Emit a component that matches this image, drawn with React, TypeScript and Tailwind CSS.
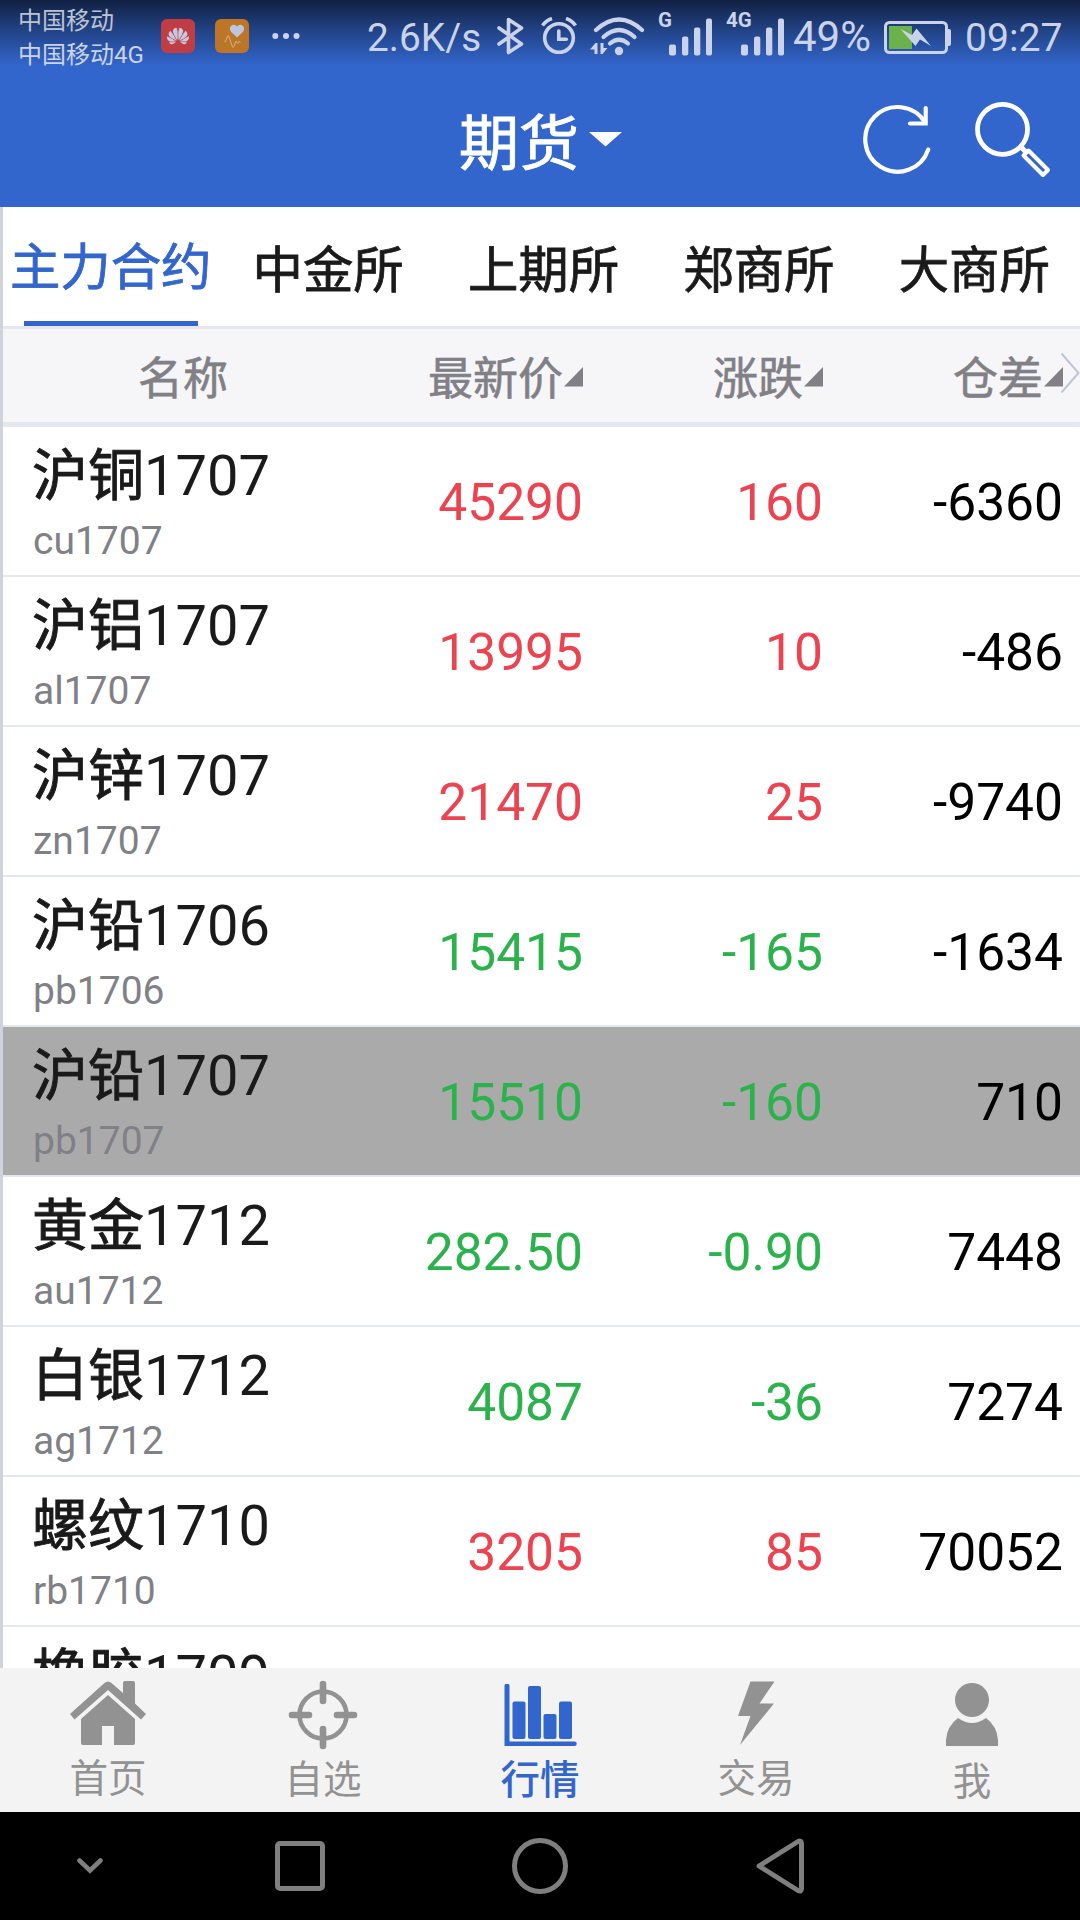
import React from 'react';
import { SiHuawei } from 'react-icons/si';

const tabs = ['主力合约', '中金所', '上期所', '郑商所', '大商所'];

const quotes = [
  { name: '沪铜', month: '1707', code: 'cu1707', price: '45290', change: '160', diff: '-6360', up: true },
  { name: '沪铝', month: '1707', code: 'al1707', price: '13995', change: '10', diff: '-486', up: true },
  { name: '沪锌', month: '1707', code: 'zn1707', price: '21470', change: '25', diff: '-9740', up: true },
  { name: '沪铅', month: '1706', code: 'pb1706', price: '15415', change: '-165', diff: '-1634', up: false },
  { name: '沪铅', month: '1707', code: 'pb1707', price: '15510', change: '-160', diff: '710', up: false, pressed: true },
  { name: '黄金', month: '1712', code: 'au1712', price: '282.50', change: '-0.90', diff: '7448', up: false },
  { name: '白银', month: '1712', code: 'ag1712', price: '4087', change: '-36', diff: '7274', up: false },
  { name: '螺纹', month: '1710', code: 'rb1710', price: '3205', change: '85', diff: '70052', up: true },
  { name: '橡胶', month: '1709', code: '', price: '', change: '', diff: '', up: true },
];

const SignalBars = () => (
  <svg width="43" height="38" viewBox="0 0 43 38" fill="currentColor">
    <rect x="0" y="26.5" width="7" height="11" rx="2" />
    <rect x="13" y="18.5" width="6.3" height="19" rx="2" />
    <rect x="25" y="9.5" width="6.3" height="28" rx="2" />
    <rect x="37" y="0.5" width="6" height="37" rx="2" />
  </svg>
);

const StatusBar = () => (
  <div className="flex h-[72px] bg-linear-to-b from-black/68 from-0% via-black/30 via-48% to-transparent to-92% text-[#cad3ea]">
    <div className="ml-[18px] mt-[4px] w-[143px] text-[24px] leading-[34px] whitespace-nowrap">
      <p className="text-[#bcc3d5]">中国移动</p>
      <p>中国移动4G</p>
    </div>
    <div className="mt-[19px] flex h-[34px] w-[34px] items-center justify-center rounded-[6px] bg-[#c13d44]">
      <SiHuawei size={22} color="#c3cbe0" />
    </div>
    <svg className="mt-[19px] ml-5" width="34" height="34" viewBox="0 0 34 34">
      <rect width="34" height="34" rx="6" fill="#bf7526" />
      <path d="M0 22.8h34" stroke="#a07b50" strokeWidth="0.7" />
      <path d="M22 18.5l-5.8-5.6c-2.8-3.4-.4-7.4 2.7-7.1 1.7.1 2.6 1.2 3.1 2 .5-.8 1.6-2 3.3-2 3.3 0 5.3 4 2.6 7.1z" fill="#bcc6dc" />
      <path d="M9.5 22.8h1l2-5.6c.4-1 1-1 1.3.1l3.6 10.4c.4 1 1 1 1.4 0l2.2-5.5 1.8 2.2 1.3-2 1.5 1" fill="none" stroke="#cfb993" strokeWidth="0.9" />
    </svg>
    <svg className="mt-[32px] ml-[23px]" width="28" height="8" viewBox="0 0 28 8" fill="currentColor">
      <circle cx="3.3" cy="4" r="3" />
      <circle cx="14" cy="4" r="3" />
      <circle cx="24.5" cy="4" r="3" />
    </svg>
    <span className="ml-[67px] mt-[15px] w-[130px] text-[38.8px] leading-[46px]">2.6K/s</span>
    <svg className="mt-[17px]" width="27" height="38" viewBox="0 0 27 38" fill="none" stroke="currentColor" strokeWidth="3.6" strokeLinejoin="round" strokeLinecap="round">
      <path d="M2 11l22.5 16L11.5 35.5V2.5L24.5 11 2 27" />
    </svg>
    <svg className="mt-[17px] ml-[17px]" width="36" height="38" viewBox="0 0 36 38" fill="none" stroke="currentColor">
      <circle cx="18" cy="21" r="14.3" strokeWidth="3.6" />
      <path d="M17.8 14v8.2h7.5" strokeWidth="3.6" strokeLinecap="round" />
      <path d="M1.5 8.5Q5 3.5 11 1.5M34.5 8.5Q31 3.5 25 1.5" strokeWidth="3.6" />
    </svg>
    <svg className="mt-[17px] ml-[13px]" width="55" height="39" viewBox="0 0 55 39" fill="none" stroke="currentColor" strokeWidth="4.2" strokeLinecap="round">
      <path d="M6 13Q29 -8 52 13" />
      <path d="M13.5 20Q29 6 44.5 20" />
      <path d="M20 26.5Q29 19 38 26.5" />
      <circle cx="29" cy="34" r="4.2" fill="currentColor" stroke="none" />
      <path d="M0 32.5L5.5 26H7.5V37H4.5V32.5zM10.5 26H13.5V31H17.5L12.5 37H10.5z" fill="currentColor" stroke="none" />
    </svg>
    <span className="ml-[13px] mt-[8px] w-[11px] text-[20.5px] font-bold leading-[24px]">G</span>
    <div className="mt-[17.5px] w-[43px]">
      <SignalBars />
    </div>
    <span className="ml-[14px] mt-[8px] w-[15px] text-[20.5px] font-bold leading-[24px]">4G</span>
    <div className="mt-[17.5px] w-[43px]">
      <SignalBars />
    </div>
    <span className="ml-[9px] mt-[14px] w-[91px] text-[42px] leading-[46px]">49%</span>
    <svg className="mt-[21px]" width="68" height="33" viewBox="0 0 68 33">
      <rect x="1.5" y="1.5" width="61" height="30" rx="4" fill="none" stroke="currentColor" strokeWidth="3" />
      <path d="M63 8h2a2 2 0 0 1 2 2v13a2 2 0 0 1-2 2h-2z" fill="currentColor" />
      <rect x="5" y="5" width="23" height="23" fill="#6bb24d" />
      <path d="M16.5 8L28 14 32.5 7.5 47 25 36 18.5 31.5 25z" fill="currentColor" />
    </svg>
    <span className="ml-[13px] mt-[15px] text-[39.2px] leading-[46px]">09:27</span>
  </div>
);

const TitleBar = () => (
  <div className="flex h-[135px] text-white">
    <div className="ml-[459px] mt-[33px] w-[130px] text-[60px] leading-[80px] [-webkit-text-stroke:0.9px]">期货</div>
    <svg className="mt-[60px]" width="33" height="15" viewBox="0 0 33 15" fill="currentColor">
      <path d="M0 0h33L16.5 14.5z" />
    </svg>
    <svg className="mt-[30px] ml-[241px]" width="68" height="72" viewBox="0 0 68 72" fill="none" stroke="currentColor" strokeWidth="4.2" strokeLinecap="round">
      <path d="M65.2 47.6A32.3 32.3 0 1 1 62 20.3" />
      <path d="M62.7 6V21.5H47" />
    </svg>
    <svg className="mt-[29px] ml-[44px]" width="78" height="78" viewBox="0 0 78 78" fill="none" stroke="currentColor">
      <circle cx="27.5" cy="28.3" r="25" strokeWidth="4.8" />
      <path d="M45.5 45.5l5 5" strokeWidth="5" />
      <path d="M53.5 49.5L73 69 68 74 48.5 54.5z" strokeWidth="4" strokeLinejoin="round" />
    </svg>
  </div>
);

const Tabs = () => (
  <div className="flex h-[122px] border-b-[3px] border-[#e4e7f0] text-[50.4px] leading-[60px] text-[#1a1a1a] [-webkit-text-stroke:0.8px]">
    {tabs.map((tab, i) =>
      i === 0 ? (
        <div key={tab} className="flex w-[216px] flex-col items-center pt-[31px] text-[#3366cc] whitespace-nowrap">
          {tab}
          <span className="mt-[23px] h-[5px] w-[174px] bg-[#3366cc]" />
        </div>
      ) : (
        <div key={tab} className="w-[216px] pl-[4px] pt-[34px] text-center">{tab}</div>
      )
    )}
  </div>
);

const SortMark = () => (
  <svg className="mt-[33px] ml-px shrink-0" width="19" height="20" viewBox="0 0 19 20" fill="#808086">
    <path d="M19 0v19.5H0z" />
  </svg>
);

const ColumnHead = () => (
  <div className="relative flex h-[98px] border-b-[5px] border-[#e4e7f0] bg-[#f6f6f9] pt-[5px] text-[45px] leading-[92px] text-[#808086]">
    <div className="w-[360px] text-center [-webkit-text-stroke:0.6px]">名称</div>
    <div className="flex w-[220px] justify-end [-webkit-text-stroke:0.6px]">最新价<SortMark /></div>
    <div className="flex w-[240px] justify-end [-webkit-text-stroke:0.6px]">涨跌<SortMark /></div>
    <div className="flex w-[240px] justify-end [-webkit-text-stroke:0.6px]">仓差<SortMark /></div>
    <svg className="absolute right-0 top-[23px]" width="20" height="42" viewBox="0 0 20 42" fill="none" stroke="#bcc6d6" strokeWidth="2">
      <path d="M1.5 1.5L18.5 21 1.5 40.5" />
    </svg>
  </div>
);

const QuoteRow = ({ q }: { q: (typeof quotes)[number] }) => (
  <div className={`flex h-[150px] shrink-0 border-b-2 border-[#e4e7f0] ${q.pressed ? 'bg-[#aaaaaa]' : 'bg-white'}`}>
    <div className="w-[360px] pl-[29px] pt-[13px]">
      <p className="flex text-[56px] leading-[72px] text-[#1a1a1a]">
        <span className="[-webkit-text-stroke:0.9px]">{q.name}</span>
        {q.month}
      </p>
      <p className="pl-px pt-px text-[39px] leading-[57px] text-[#808086]">{q.code}</p>
    </div>
    <div className={`flex pt-[2px] text-right text-[51.5px] leading-[148px] ${q.up ? 'text-[#ec4350]' : 'text-[#2bb24c]'}`}>
      <p className="w-[220px]">{q.price}</p>
      <p className="w-[240px]">{q.change}</p>
      <p className="w-[240px] text-black">{q.diff}</p>
    </div>
  </div>
);

const BottomTabs = () => (
  <div className="grid h-[144px] grid-cols-5 bg-[#f3f3f3] text-center text-[38.5px] leading-[50px] text-[#929292]">
    <div className="flex flex-col items-center pt-[12px]">
      <svg width="76" height="68" viewBox="0 0 76 68" fill="currentColor">
        <path d="M4.5 39.5L0 34 34.5 3Q38 0 41.5 3L53 13V3a2 2 0 0 1 2-2h8a2 2 0 0 1 2 2v20.5L76 34l-5 5.5L38 10z" />
        <path d="M38 15L65 39v24a2 2 0 0 1-2 2H44V46H32v19H13a2 2 0 0 1-2-2V39z" />
      </svg>
      <span className="mt-[6px]">首页</span>
    </div>
    <div className="flex flex-col items-center pr-[2px] pt-[12px]">
      <svg width="70" height="70" viewBox="0 0 70 70" fill="none" stroke="currentColor">
        <circle cx="35" cy="35" r="23.5" strokeWidth="4.6" />
        <path d="M35 4v17M35 49v17M4 35h17M49 35h17" strokeWidth="6.6" strokeLinecap="round" />
      </svg>
      <span className="mt-[5px]">自选</span>
    </div>
    <div className="flex flex-col items-center pt-[16px] text-[#3366cc]">
      <svg width="73" height="66" viewBox="0 0 73 66" fill="currentColor">
        <path d="M.5 2a2.4 2.4 0 0 1 5 0v55.500h65a2.200 2.200 0 0 1 0 4.500H.5z" />
        <rect x="8.5" y="17.5" width="13" height="37.5" rx="2" />
        <rect x="24" y="2" width="13" height="53" rx="2" />
        <rect x="39.5" y="30" width="13" height="25" rx="2" />
        <rect x="55" y="17.5" width="13" height="37.5" rx="2" />
      </svg>
      <span className="mt-[6px] text-[39.5px] font-medium">行情</span>
    </div>
    <div className="flex flex-col items-center pt-[13px]">
      <svg width="37" height="65" viewBox="0 0 37 65" fill="currentColor">
        <path d="M12.5 .5H36.5L21.5 22.5H36L2 64 12.5 35H0z" />
      </svg>
      <span className="mt-[8px]">交易</span>
    </div>
    <div className="flex flex-col items-center pt-[14px]">
      <svg width="52" height="65" viewBox="0 0 52 65" fill="currentColor">
        <circle cx="26" cy="18" r="17" />
        <path d="M0 64V58Q1 44 12 36Q26 46 40 36Q51 44 52 58V64z" />
      </svg>
      <span className="mt-[10px]">我</span>
    </div>
  </div>
);

const NavBar = () => (
  <div className="flex h-[108px] items-center bg-black text-[#7f7f7f]">
    <svg className="ml-[77px]" width="26" height="16" viewBox="0 0 26 16" fill="none" stroke="currentColor" strokeWidth="4.6" strokeLinecap="round">
      <path d="M2.5 2.5L13 12.5 23.5 2.5" />
    </svg>
    <div className="ml-[172px] h-[50px] w-[50px] rounded-[5px] border-[5px] border-[#7f7f7f]" />
    <div className="ml-[187px] h-[56px] w-[56px] rounded-full border-[5px] border-[#7f7f7f]" />
    <svg className="ml-[188px]" width="49" height="56" viewBox="0 0 49 56" fill="none" stroke="currentColor" strokeWidth="5" strokeLinejoin="round">
      <path d="M3 28L42 3.5Q45.5 2 45.5 5.5V50.5Q45.5 54 42 52.5z" />
    </svg>
  </div>
);

export default function App() {
  return (
    <div className="flex h-[1920px] w-[1080px] flex-col overflow-hidden bg-white font-['Roboto','Noto_Sans_CJK_SC',sans-serif]">
      <header className="bg-[#3366cc]">
        <StatusBar />
        <TitleBar />
      </header>
      <main className="h-[1461px] overflow-hidden border-l-[3px] border-[#d0d2dc]">
        <Tabs />
        <ColumnHead />
        {quotes.map((q) => (
          <QuoteRow key={q.name + q.month} q={q} />
        ))}
      </main>
      <BottomTabs />
      <NavBar />
    </div>
  );
}
